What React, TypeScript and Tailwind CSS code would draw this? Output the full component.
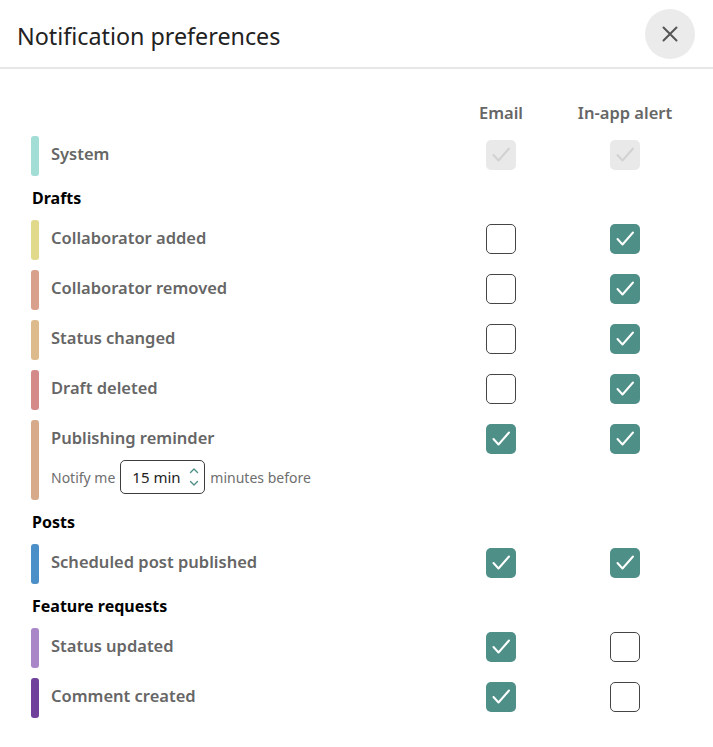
type Mode = 'on' | 'off' | 'disabled'

type Row = {
  label: string
  color: string
  email: Mode
  app: Mode
  extra?: boolean
}

type Section = { title?: string; rows: Row[] }

const SECTIONS: Section[] = [
  { rows: [{ label: 'System', color: 'bg-[#a2ddd6]', email: 'disabled', app: 'disabled' }] },
  {
    title: 'Drafts',
    rows: [
      { label: 'Collaborator added', color: 'bg-[#e1d98c]', email: 'off', app: 'on' },
      { label: 'Collaborator removed', color: 'bg-[#d9a18c]', email: 'off', app: 'on' },
      { label: 'Status changed', color: 'bg-[#ddbb8d]', email: 'off', app: 'on' },
      { label: 'Draft deleted', color: 'bg-[#d58a8a]', email: 'off', app: 'on' },
      { label: 'Publishing reminder', color: 'bg-[#d7aa8a]', email: 'on', app: 'on', extra: true },
    ],
  },
  {
    title: 'Posts',
    rows: [{ label: 'Scheduled post published', color: 'bg-[#4b8fc9]', email: 'on', app: 'on' }],
  },
  {
    title: 'Feature requests',
    rows: [
      { label: 'Status updated', color: 'bg-[#a986c8]', email: 'on', app: 'off' },
      { label: 'Comment created', color: 'bg-[#6f419a]', email: 'on', app: 'off' },
    ],
  },
]

function Check({ mode }: { mode: Mode }) {
  if (mode === 'off') {
    return <div className="h-[30px] w-[30px] rounded-[5px] border-[1.5px] border-[#454545] bg-white" />
  }
  const disabled = mode === 'disabled'
  return (
    <div
      className={
        disabled
          ? 'flex h-[30px] w-[30px] items-center justify-center rounded-[5px] bg-[#e9e9e9]'
          : 'flex h-[30px] w-[30px] items-center justify-center rounded-[5px] bg-[#4e8f87]'
      }
    >
      <svg width="30" height="30" viewBox="0 0 30 30" fill="none">
        <polyline
          points="7.5,15 12.5,20.5 23,8.5"
          stroke={disabled ? '#d2d2d2' : '#ffffff'}
          strokeWidth="2"
          strokeLinecap="round"
          strokeLinejoin="round"
        />
      </svg>
    </div>
  )
}

function PrefRow({ row }: { row: Row }) {
  return (
    <div className="grid grid-cols-[1fr_124px_124px]">
      <div className="flex gap-[12px]">
        <div className={`w-[8px] shrink-0 rounded-[3px] ${row.color}`} />
        <div className="flex flex-col">
          <div className="flex h-[40px] items-center pb-[3px] text-[16.5px] font-semibold text-[#666666]">
            {row.label}
          </div>
          {row.extra && (
            <div className="flex h-[40px] items-start gap-[5px] text-[14px] text-[#6e6e6e]">
              <div className="flex h-[34px] items-center">Notify me</div>
              <div className="flex h-[34px] w-[85px] items-center justify-between rounded-[5px] border border-[#3d3d3d] pl-[11px] pr-[4px] text-[15px] text-[#222]">
                <span>15 min</span>
                <svg width="12" height="24" viewBox="0 0 12 24" fill="none">
                  <polyline points="2.5,7.5 6,4 9.5,7.5" stroke="#4e8f87" strokeWidth="1.4" strokeLinecap="round" strokeLinejoin="round" />
                  <polyline points="2.5,16.5 6,20 9.5,16.5" stroke="#4e8f87" strokeWidth="1.4" strokeLinecap="round" strokeLinejoin="round" />
                </svg>
              </div>
              <div className="flex h-[34px] items-center">minutes before</div>
            </div>
          )}
        </div>
      </div>
      <div className="flex h-[40px] items-center justify-center pb-[3px]">
        <Check mode={row.email} />
      </div>
      <div className="flex h-[40px] items-center justify-center pb-[3px]">
        <Check mode={row.app} />
      </div>
    </div>
  )
}

export default function App() {
  return (
    <div className="min-h-[747px] bg-white font-['Noto_Sans','Open_Sans',sans-serif]">
      <header className="flex h-[69px] items-center justify-between border-b-2 border-[#e7e7e7] pl-[17px] pr-[18px]">
        <h1 className="pt-[5px] text-[23.3px] font-normal text-[#222]">Notification preferences</h1>
        <button className="flex h-[50px] w-[50px] items-center justify-center rounded-full bg-[#ebebeb]">
          <svg width="18" height="18" viewBox="0 0 18 18" fill="none">
            <path d="M2.5 2.5L15.5 15.5M15.5 2.5L2.5 15.5" stroke="#555" strokeWidth="2" strokeLinecap="round" />
          </svg>
        </button>
      </header>

      <div className="flex flex-col gap-[10px] pl-[31px] pr-[26px] pt-[31px]">
        <div className="grid h-[26px] grid-cols-[1fr_124px_124px] items-center text-[16.5px] font-semibold text-[#666]">
          <div />
          <div className="text-center">Email</div>
          <div className="text-center">In-app alert</div>
        </div>
        {SECTIONS.map((s, i) => (
          <div key={i} className="flex flex-col gap-[10px]">
            {s.title && (
              <div className="flex h-[24px] items-center pl-[1px] text-[16px] font-bold text-black">{s.title}</div>
            )}
            {s.rows.map((r) => (
              <PrefRow key={r.label} row={r} />
            ))}
          </div>
        ))}
      </div>
    </div>
  )
}
